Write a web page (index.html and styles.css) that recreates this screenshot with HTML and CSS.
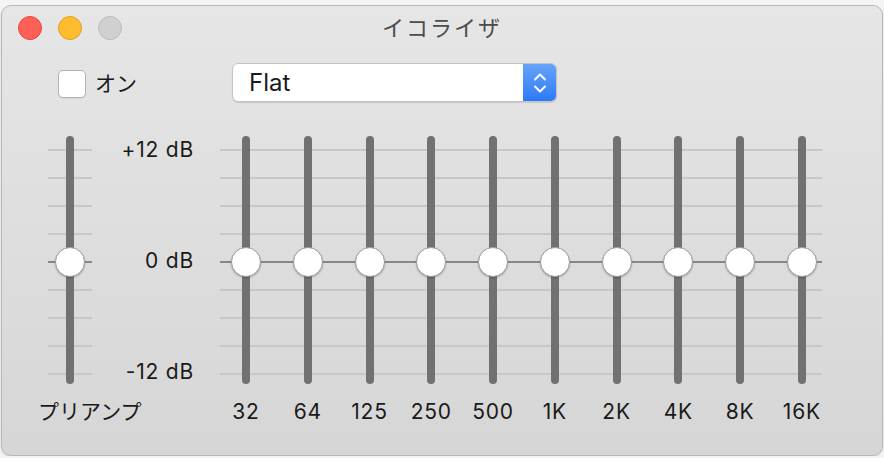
FILE: index.html
```html
<!DOCTYPE html>
<html lang="ja">
<head>
  <meta charset="UTF-8" />
  <meta name="viewport" content="width=device-width, initial-scale=1.0" />
  <title>イコライザ</title>
  <link rel="stylesheet" href="styles.css">
</head>
<body>
  <div class="window">
    <div class="titlebar">
      <div class="lights">
        <span class="light close"></span>
        <span class="light minimize"></span>
        <span class="light zoom"></span>
      </div>
      <div class="title">イコライザ</div>
      <div></div>
    </div>

    <div class="controls">
      <label class="toggle">
        <span class="checkbox"></span>
        <span class="toggle-text">オン</span>
      </label>
      <div class="popup">
        <span class="popup-value">Flat</span>
        <span class="popup-arrows">
          <svg width="14" height="24" viewBox="0 0 14 24">
            <path d="M2 8.5 L7 3.5 L12 8.5" fill="none" stroke="#fff" stroke-width="2" stroke-linecap="round" stroke-linejoin="round"/>
            <path d="M2 15.5 L7 20.5 L12 15.5" fill="none" stroke="#fff" stroke-width="2" stroke-linecap="round" stroke-linejoin="round"/>
          </svg>
        </span>
      </div>
    </div>

    <div class="eq">
      <div class="preamp">
        <div class="slider ticks"><span class="knob"></span></div>
        <div class="preamp-label">プリアンプ</div>
      </div>

      <div class="db-scale">
        <span>+12 dB</span>
        <span>0 dB</span>
        <span>-12 dB</span>
      </div>

      <div class="bands ticks">
        <div class="band"><div class="slider"><span class="knob"></span></div><div class="band-label">32</div></div>
        <div class="band"><div class="slider"><span class="knob"></span></div><div class="band-label">64</div></div>
        <div class="band"><div class="slider"><span class="knob"></span></div><div class="band-label">125</div></div>
        <div class="band"><div class="slider"><span class="knob"></span></div><div class="band-label">250</div></div>
        <div class="band"><div class="slider"><span class="knob"></span></div><div class="band-label">500</div></div>
        <div class="band"><div class="slider"><span class="knob"></span></div><div class="band-label">1K</div></div>
        <div class="band"><div class="slider"><span class="knob"></span></div><div class="band-label">2K</div></div>
        <div class="band"><div class="slider"><span class="knob"></span></div><div class="band-label">4K</div></div>
        <div class="band"><div class="slider"><span class="knob"></span></div><div class="band-label">8K</div></div>
        <div class="band"><div class="slider"><span class="knob"></span></div><div class="band-label">16K</div></div>
      </div>
    </div>
  </div>
</body>
</html>
```

FILE: styles.css
```css
body { margin: 0; background: #f4f4f4; font-family: "Inter", "Noto Sans CJK JP", sans-serif; color: #1a1a1a; }

.window {
  box-sizing: border-box;
  width: 882px;
  height: 451px;
  margin: 5px 0 0 1px;
  border: 1px solid #b7b7b7;
  border-radius: 10px;
  background: linear-gradient(#e6e6e6, #d6d6d6);
  box-shadow: 0 1px 2px rgba(0, 0, 0, 0.15);
  overflow: hidden;
}

/* title bar */
.titlebar { display: grid; grid-template-columns: 1fr auto 1fr; height: 46px; box-sizing: border-box; padding: 10px 16px 0 16px; }
.lights { display: flex; gap: 16px; }
.light { width: 24px; height: 24px; border-radius: 50%; box-sizing: border-box; }
.light.close { background: #fe5f57; border: 1px solid #e5483f; }
.light.minimize { background: #febc2e; border: 1px solid #dea123; }
.light.zoom { background: #d0d0d0; border: 1px solid #bcbcbc; }
.title { font-size: 22px; line-height: 24px; letter-spacing: 2px; color: #4c4c4c; }

/* checkbox + preset popup */
.controls { display: flex; align-items: center; margin-top: 11px; padding-left: 56px; }
.toggle { display: flex; align-items: center; gap: 9px; width: 174px; margin-top: 3px; }
.checkbox { width: 28px; height: 28px; box-sizing: border-box; background: #fff; border: 1px solid #b4b4b4; border-radius: 5px; box-shadow: 0 1px 1px rgba(0, 0, 0, 0.06); }
.toggle-text { font-size: 21px; line-height: 28px; }

.popup {
  display: flex;
  width: 325px;
  height: 39px;
  box-sizing: border-box;
  background: #fff;
  border: 1px solid #c3c3c3;
  border-radius: 6px;
  box-shadow: 0 1px 1px rgba(0, 0, 0, 0.12);
  overflow: hidden;
}
.popup-value { flex: 1; padding-left: 16px; font-size: 24px; line-height: 37px; }
.popup-arrows { width: 33px; display: flex; align-items: center; justify-content: center; background: linear-gradient(#66a3fc, #2d79f6); }

/* sliders */
.eq { display: flex; margin-top: 34px; padding-left: 46px; }

.ticks {
  background-image:
    linear-gradient(#888, #888),
    repeating-linear-gradient(to bottom, transparent 0, transparent 13px, #c7c7c7 13px, #c7c7c7 15px, transparent 15px, transparent 28px);
  background-size: 100% 2px, 100% 248px;
  background-position: 0 125px, 0 0;
  background-repeat: no-repeat;
}

.slider { position: relative; height: 248px; }
.slider::before {
  content: "";
  position: absolute;
  left: 50%;
  top: 0;
  width: 8px;
  height: 248px;
  margin-left: -4px;
  border-radius: 4px;
  background: #717171;
}
.knob {
  position: absolute;
  left: 50%;
  top: 126px;
  width: 30px;
  height: 30px;
  margin: -15px 0 0 -15px;
  box-sizing: border-box;
  border-radius: 50%;
  background: #fff;
  border: 1px solid #9c9c9c;
  box-shadow: 0 1px 2px rgba(0, 0, 0, 0.25);
}

.preamp { width: 44px; }
.preamp-label { margin: 16px 0 0 -10px; font-size: 21px; line-height: 24px; white-space: nowrap; }

.db-scale {
  display: flex;
  flex-direction: column;
  justify-content: space-between;
  align-items: flex-end;
  width: 102px;
  height: 248px;
  box-sizing: border-box;
  padding-top: 2px;
  font-size: 21px;
  line-height: 24px;
  letter-spacing: 0.8px;
}

.bands { display: grid; grid-template-columns: repeat(10, 40px); column-gap: 21.78px; margin-left: 26px; padding-left: 6px; background-size: 602px 2px, 602px 248px; }
.band-label { display: flex; justify-content: center; margin-top: 16px; font-size: 21px; line-height: 24px; letter-spacing: 0.8px; white-space: nowrap; }
```
